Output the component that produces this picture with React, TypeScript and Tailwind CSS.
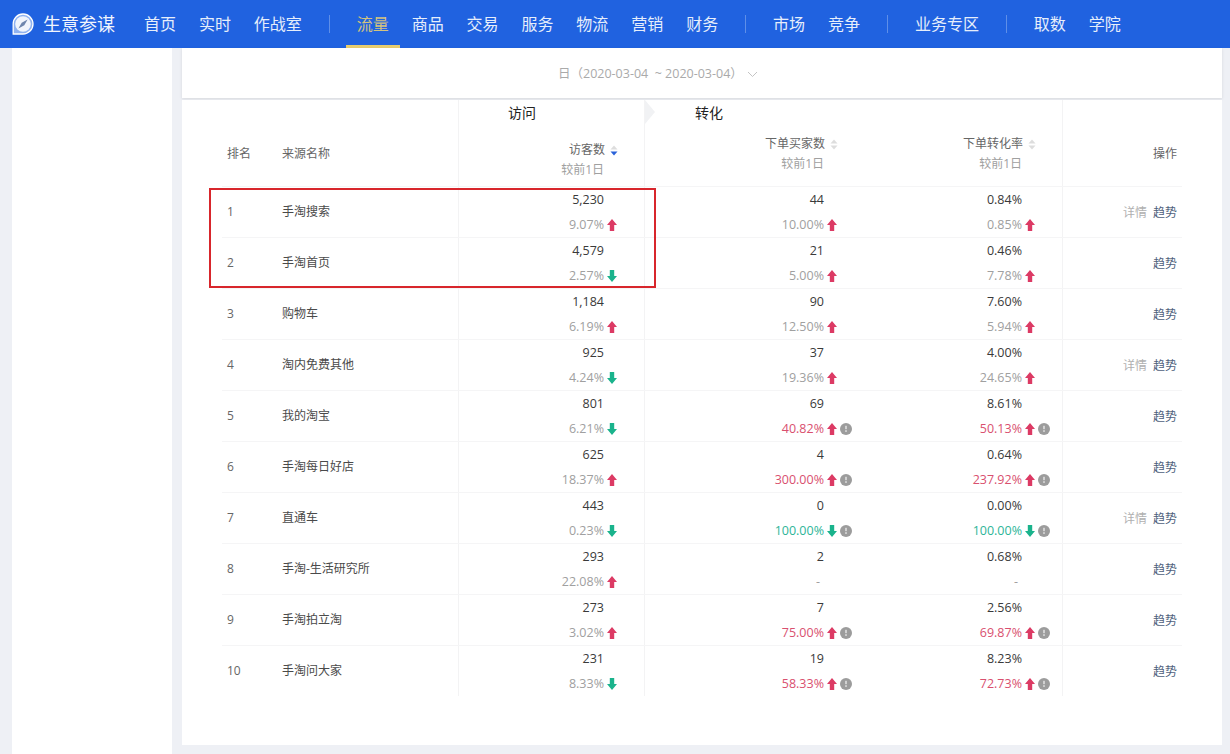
import React from "react";

const FONT = { fontFamily: '"Open Sans", "Noto Sans CJK SC", sans-serif' };

type Change = { t: string; dir?: "up" | "down"; tone?: "gray" | "red" | "green"; info?: boolean };
type Row = {
  name: string;
  detail?: boolean;
  v: [string, Change];
  b: [string, Change];
  r: [string, Change];
};

const rows: Row[] = [
  { name: "手淘搜索", detail: true, v: ["5,230", { t: "9.07%", dir: "up" }], b: ["44", { t: "10.00%", dir: "up" }], r: ["0.84%", { t: "0.85%", dir: "up" }] },
  { name: "手淘首页", v: ["4,579", { t: "2.57%", dir: "down" }], b: ["21", { t: "5.00%", dir: "up" }], r: ["0.46%", { t: "7.78%", dir: "up" }] },
  { name: "购物车", v: ["1,184", { t: "6.19%", dir: "up" }], b: ["90", { t: "12.50%", dir: "up" }], r: ["7.60%", { t: "5.94%", dir: "up" }] },
  { name: "淘内免费其他", detail: true, v: ["925", { t: "4.24%", dir: "down" }], b: ["37", { t: "19.36%", dir: "up" }], r: ["4.00%", { t: "24.65%", dir: "up" }] },
  { name: "我的淘宝", v: ["801", { t: "6.21%", dir: "down" }], b: ["69", { t: "40.82%", dir: "up", tone: "red", info: true }], r: ["8.61%", { t: "50.13%", dir: "up", tone: "red", info: true }] },
  { name: "手淘每日好店", v: ["625", { t: "18.37%", dir: "up" }], b: ["4", { t: "300.00%", dir: "up", tone: "red", info: true }], r: ["0.64%", { t: "237.92%", dir: "up", tone: "red", info: true }] },
  { name: "直通车", detail: true, v: ["443", { t: "0.23%", dir: "down" }], b: ["0", { t: "100.00%", dir: "down", tone: "green", info: true }], r: ["0.00%", { t: "100.00%", dir: "down", tone: "green", info: true }] },
  { name: "手淘-生活研究所", v: ["293", { t: "22.08%", dir: "up" }], b: ["2", { t: "-" }], r: ["0.68%", { t: "-" }] },
  { name: "手淘拍立淘", v: ["273", { t: "3.02%", dir: "up" }], b: ["7", { t: "75.00%", dir: "up", tone: "red", info: true }], r: ["2.56%", { t: "69.87%", dir: "up", tone: "red", info: true }] },
  { name: "手淘问大家", v: ["231", { t: "8.33%", dir: "down" }], b: ["19", { t: "58.33%", dir: "up", tone: "red", info: true }], r: ["8.23%", { t: "72.73%", dir: "up", tone: "red", info: true }] },
];

function Arrow({ dir }: { dir: "up" | "down" }) {
  return (
    <span className="flex w-[14px] justify-center">
      <svg width="10" height="12" viewBox="0 0 10 12">
        {dir === "up" ? (
          <path d="M5 0 L10 6 H7.2 V12 H2.8 V6 H0 Z" fill="#dc3a64" />
        ) : (
          <path d="M5 12 L10 6 H7.2 V0 H2.8 V6 H0 Z" fill="#1ab38c" />
        )}
      </svg>
    </span>
  );
}

function Info() {
  return (
    <span className="flex w-[13px] justify-end">
      <svg width="12" height="12" viewBox="0 0 12 12">
        <circle cx="6" cy="6" r="6" fill="#9c9c9c" />
        <rect x="5.2" y="2.8" width="1.6" height="3.4" fill="#dedede" />
        <rect x="5.2" y="7.2" width="1.6" height="1.7" fill="#dedede" />
      </svg>
    </span>
  );
}

function Sort({ active }: { active?: boolean }) {
  return (
    <svg width="8" height="11" viewBox="0 0 8 11" className="ml-[5px]">
      <path d="M4 0.5 L7.5 4.5 H0.5 Z" fill="#dddddd" />
      <path d="M4 10.5 L7.5 6.5 H0.5 Z" fill={active ? "#2a62d9" : "#dddddd"} />
    </svg>
  );
}

function Metric({ value, change, bordered = true }: { value: string; change: Change; bordered?: boolean }) {
  const color =
    change.tone === "red" ? "text-[#d9506f]" : change.tone === "green" ? "text-[#2db598]" : "text-[#a0a0a0]";
  let pad = "pr-[25px]";
  if (change.info) pad = "pr-[12px]";
  if (!change.dir) pad = "pr-[44px]";
  return (
    <div className={`text-[12.5px] leading-[25px] ${bordered ? "border-l border-[#f3f3f4]" : ""}`}>
      <div className="pr-[40px] text-right text-[#3a3a3a]">{value}</div>
      <div className={`flex items-center justify-end ${pad} ${color}`}>
        <span className={change.dir ? "mr-px" : ""}>{change.t}</span>
        {change.dir && <Arrow dir={change.dir} />}
        {change.info && <Info />}
      </div>
    </div>
  );
}

function NavItem({ label, active }: { label: string; active?: boolean }) {
  return (
    <a
      className={`mr-[0.9px] flex h-12 items-center border-b-[3px] px-[11px] pt-[3px] text-[16px] ${
        active ? "border-[#e8cd6e] text-[#d3c37f]" : "border-transparent text-[#e6eefb]"
      }`}
    >
      {label}
    </a>
  );
}

function Divider() {
  return <span className="ml-[15px] mr-[16px] h-[18px] w-px bg-[#5f8fe8]" />;
}

function HeadMetric({ label, active, shift, bordered }: { label: string; active?: boolean; shift?: boolean; bordered?: boolean }) {
  return (
    <div
      className={`flex h-full flex-col items-end pr-[26px] ${shift ? "pt-[16px]" : "pt-[10px]"} ${
        bordered ? "border-l border-[#f3f3f4]" : ""
      }`}
    >
      <div className="flex items-center leading-[20px] text-[#666666]">
        {label}
        <Sort active={active} />
      </div>
      <div className="pr-[14px] leading-[20px] text-[#a0a0a0]">较前1日</div>
    </div>
  );
}

const COLS = "grid-cols-[55px_181px_186px_220px_198px_120px]";

export default function App() {
  return (
    <div style={FONT} className="flex h-[754px] w-[1230px] flex-col overflow-hidden bg-[#eef0f5] text-[12px]">
      <header className="flex h-12 shrink-0 items-center bg-[#2062e0]">
        <svg width="22" height="22" viewBox="0 0 22 22" className="ml-[12px]">
          <path d="M11 1 A10 10 0 1 1 11 21 H1.2 V11 A9.8 9.8 0 0 1 11 1 Z" fill="#8fb2f0" stroke="#ffffff" strokeWidth="1.3" />
          <circle cx="11" cy="11" r="7.8" fill="#f1f5fc" />
          <path d="M15.6 6.4 L12.3 12.3 L6.4 15.6 L9.7 9.7 Z" fill="#6f86ad" />
        </svg>
        <span className="ml-[9px] mr-[18px] text-[18px] text-[#f1f5fd]">生意参谋</span>
        <NavItem label="首页" />
        <NavItem label="实时" />
        <NavItem label="作战室" />
        <Divider />
        <NavItem label="流量" active />
        <NavItem label="商品" />
        <NavItem label="交易" />
        <NavItem label="服务" />
        <NavItem label="物流" />
        <NavItem label="营销" />
        <NavItem label="财务" />
        <Divider />
        <NavItem label="市场" />
        <NavItem label="竞争" />
        <Divider />
        <NavItem label="业务专区" />
        <Divider />
        <NavItem label="取数" />
        <NavItem label="学院" />
      </header>

      <div className="flex min-h-0 flex-1">
        <aside className="ml-[12px] w-[160px] shrink-0 bg-white" />
        <main className="ml-[10px] w-[1040px] shrink-0">
          <div className="flex h-[50px] items-center bg-white pl-[376px] pt-[3px] text-[12.5px] text-[#aaaaaa] shadow-[0_1px_3px_rgba(0,0,0,0.1)]">
            <span className="whitespace-pre">日（2020-03-04  ~ 2020-03-04）</span>
            <svg width="11" height="7" viewBox="0 0 11 7" className="ml-[4px]">
              <path d="M1 1 L5.5 5.5 L10 1" fill="none" stroke="#c4c4c4" strokeWidth="1" />
            </svg>
          </div>

          <div className="mt-[2px] h-[645px] bg-white px-[40px]">
            <div className="relative">
              <div className={`grid h-[86px] ${COLS}`}>
                <div className="pl-[5px] pt-[45px] leading-[18px] text-[#666666]">排名</div>
                <div className="pl-[5px] pt-[45px] leading-[18px] text-[#666666]">来源名称</div>
                <div className="flex flex-col">
                  <div className="h-[24px] border-l border-[#f3f3f4] pl-[49px] text-[14px] leading-[26px] text-[#222222]">访问</div>
                  <div className="min-h-0 flex-1">
                    <HeadMetric label="访客数" active shift bordered />
                  </div>
                </div>
                <div className="col-span-2 flex flex-col">
                  <div className="relative h-[24px] border-l border-[#f3f3f4] pl-[50px] text-[14px] leading-[26px] text-[#222222]">
                    <span className="absolute left-0 top-0 h-0 w-0 border-y-[12px] border-l-[10px] border-y-transparent border-l-[#f1f2f4]" />
                    转化
                  </div>
                  <div className="grid min-h-0 flex-1 grid-cols-[220px_198px]">
                    <HeadMetric label="下单买家数" bordered />
                    <HeadMetric label="下单转化率" />
                  </div>
                </div>
                <div className="border-l border-[#f3f3f4] pr-[5px] pt-[45px] text-right leading-[18px] text-[#666666]">操作</div>
              </div>

              {rows.map((row, i) => (
                <div key={row.name} className={`grid h-[51px] border-t border-[#f5f5f6] ${COLS}`}>
                  <div className="flex items-center pl-[5px] text-[#666666]">{i + 1}</div>
                  <div className="flex items-center pl-[5px] text-[#4a4a4a]">{row.name}</div>
                  <Metric value={row.v[0]} change={row.v[1]} />
                  <Metric value={row.b[0]} change={row.b[1]} />
                  <Metric value={row.r[0]} change={row.r[1]} bordered={false} />
                  <div className="flex items-center justify-end gap-[6px] border-l border-[#f3f3f4] pr-[5px] pt-px">
                    {row.detail && <span className="text-[#b0b0b0]">详情</span>}
                    <span className="text-[#4f5f7c]">趋势</span>
                  </div>
                </div>
              ))}

              <div className="pointer-events-none absolute left-[-13px] top-[88px] h-[100px] w-[447px] border-2 border-[#d8262c]" />
            </div>
          </div>
        </main>
      </div>
    </div>
  );
}
